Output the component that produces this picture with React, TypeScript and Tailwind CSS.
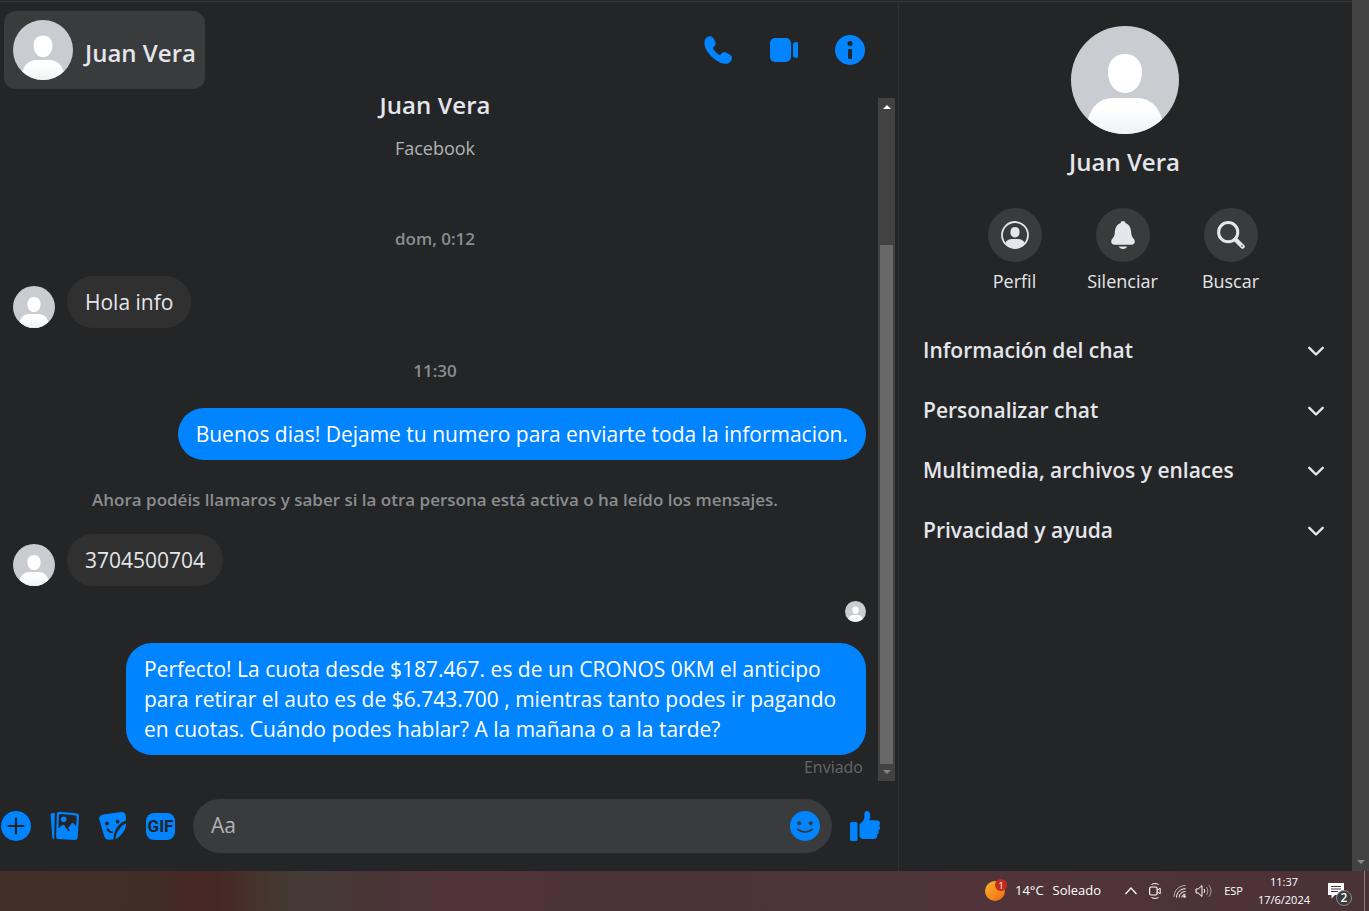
import { ReactNode } from "react";
import clsx from "clsx";

type IconProps = { className?: string };

const sections = [
  "Información del chat",
  "Personalizar chat",
  "Multimedia, archivos y enlaces",
  "Privacidad y ayuda",
];

function Avatar({ className }: IconProps) {
  return (
    <svg
      viewBox="0 0 108 108"
      className={clsx("shrink-0 rounded-full", className)}
      aria-hidden="true"
    >
      <defs>
        <linearGradient id="shoulders" x1="0" y1="0" x2="0" y2="1">
          <stop offset="0.3" stopColor="#fff" />
          <stop offset="1" stopColor="#eff1f3" />
        </linearGradient>
      </defs>
      <rect width="108" height="108" fill="#c9ccd1" />
      <path
        d="M54 28c10 0 17 7 17 18 0 12-7 21-17 21s-17-9-17-21c0-11 7-18 17-18z"
        fill="#fff"
      />
      <path
        d="M42 72h24c13 0 22 9 25 21v15H17V93c3-12 12-21 25-21z"
        fill="url(#shoulders)"
      />
    </svg>
  );
}

function PhoneIcon() {
  return (
    <svg viewBox="0 0 28 28" className="size-7" fill="currentColor" aria-hidden="true">
      <path d="M1.2 3.2C2.4 1 4.600 0 6.600.2c1.800.2 3 1.800 4 4 .9 2 1.400 3.400.8 4.900-.5 1.200-2.200 1.900-2.200 3.200 0 1.600 4.800 6.600 6.500 6.600 1.200 0 2-1.800 3.300-2.300 1.500-.6 2.900 0 4.900.9 2.200 1 3.800 2.200 4 4 .2 2-.9 4-3 5.400-2 1.200-5.400 1.300-8.600-.2C9.500 23.500 3.800 17.500 1.200 11.500.1 8.500.1 5.200 1.200 3.200z" />
    </svg>
  );
}

function VideoIcon() {
  return (
    <svg viewBox="0 0 28 24" className="h-6 w-7" fill="currentColor" aria-hidden="true">
      <rect width="21" height="24" rx="5" />
      <path d="M23 6.500c0-1.800 2-2.500 3.500-2.500.9 0 1.500.5 1.500 1.400v13.200c0 .9-.6 1.400-1.500 1.400-1.500 0-3.500-.7-3.500-2.500z" />
    </svg>
  );
}

function InfoIcon() {
  return (
    <svg viewBox="0 0 30 30" className="size-[30px]" aria-hidden="true">
      <circle cx="15" cy="15" r="15" fill="currentColor" />
      <circle cx="15" cy="8.500" r="2.500" fill="#242526" />
      <rect x="13" y="14" width="4" height="10" rx="1" fill="#242526" />
    </svg>
  );
}

function PlusIcon() {
  return (
    <svg viewBox="0 0 30 30" className="size-[30px]" aria-hidden="true">
      <circle cx="15" cy="15" r="15" fill="currentColor" />
      <path
        d="M15 7.500v15M7.500 15h15"
        stroke="#242526"
        strokeWidth="2.200"
        strokeLinecap="round"
      />
    </svg>
  );
}

function PhotosIcon() {
  return (
    <svg viewBox="0 0 30 30" className="size-[30px]" aria-hidden="true">
      <path
        d="M1.300 2.300 4.800 1.800 4.200 28.200C3 27.900 2.400 27 2.200 25.700L.6 3.600C.5 2.900.7 2.400 1.300 2.300z"
        fill="currentColor"
      />
      <path
        d="M9.500.8 26 2.300c1.900.2 3.100 1.400 3 3.300L27.700 26c-.1 1.900-1.300 3-3.200 2.900L8.500 28.100c-1.600-.1-2.500-1-2.400-2.600L6.800 3.500C6.900 1.700 7.900.7 9.500.8z"
        fill="currentColor"
      />
      <path
        d="M10.900 3.100 24.600 4.200c1.500.1 2.200 1 2.100 2.400l-.5 8.800-2.600-3c-.7-.8-1.500-.8-2.100.1L17.900 17.200l-3.300-3c-.7-.7-1.500-.7-2.200-.1L8.500 17.200 8.800 5.100c0-1.400.8-2.100 2.100-2z"
        fill="#242526"
      />
      <path
        d="m15.500 14.800 3.300 4.500"
        stroke="#242526"
        strokeWidth="1.700"
        strokeLinecap="round"
      />
      <circle cx="13.700" cy="8.300" r="2.800" fill="currentColor" />
    </svg>
  );
}

function StickerIcon() {
  return (
    <svg viewBox="0 0 28 28" className="size-7" aria-hidden="true">
      <path
        d="M4.500 2.400 22 .1c2.800-.3 4.700 1.200 4.900 4l.1 4.300c-6 2-10.600 7-12 14.500l-.8 4.700-4.300.1c-2.600 0-4.200-1.100-4.800-3.600L.3 7.500C-.3 4.600 1.500 2.700 4.500 2.400z"
        fill="currentColor"
      />
      <path
        d="M27 11.500c.3 3.500-1.300 6.700-3.700 9.800-2 2.700-4.300 4.900-6.900 5.900.4-4 1.200-6.300 3.600-9.600 1.600-2.400 4-4.900 7-6.100z"
        fill="currentColor"
      />
      <circle cx="8" cy="11.500" r="1.900" fill="#242526" />
      <circle cx="18.500" cy="9.700" r="1.900" fill="#242526" />
      <path
        d="M8.500 17c1 2 2.800 3.300 4.700 3.300"
        fill="none"
        stroke="#242526"
        strokeWidth="1.800"
        strokeLinecap="round"
      />
    </svg>
  );
}

// Rounded badge with the three letters set as real text
function GifIcon() {
  return (
    <span className="flex h-[27px] w-[29px] items-center justify-center rounded-lg bg-[#0084ff] font-['Roboto',sans-serif] text-[17px] leading-none font-bold text-[#242526]">
      GIF
    </span>
  );
}

function SmileIcon() {
  return (
    <svg viewBox="0 0 30 30" className="size-[30px]" aria-hidden="true">
      <circle cx="15" cy="15" r="15" fill="currentColor" />
      <circle cx="9.200" cy="12.200" r="2" fill="#3a3b3c" />
      <circle cx="20.800" cy="12.200" r="2" fill="#3a3b3c" />
      <path
        d="M8 18.500c4 3.300 10 3.300 14 0"
        fill="none"
        stroke="#3a3b3c"
        strokeWidth="2"
        strokeLinecap="round"
      />
    </svg>
  );
}

function LikeIcon() {
  return (
    <svg viewBox="0 0 30 30" className="size-[30px]" fill="currentColor" aria-hidden="true">
      <rect y="11" width="7.500" height="19" rx="1.500" />
      <path d="M9.500 14c0-1 .5-1.500 1.400-2.100 2.800-1.800 3.600-3.900 3.500-7.400C14.300 1.500 14.800 0 16.600 0c2.400 0 3.600 2 3.600 4.700 0 1.600-.4 3-.9 4.600h7c2.200 0 3.700 1.200 3.700 3 0 1-.3 1.700-.9 2.300.6.600.9 1.200.9 2.100 0 1.300-.7 2.200-1.700 2.700.3.500.5 1 .5 1.600 0 1.300-.7 2.200-1.900 2.600.2.400.3.800.3 1.300 0 1.900-1.500 3-3.700 3H14c-3 0-4.500-1.400-4.500-3.500z" />
    </svg>
  );
}

function ProfileIcon() {
  return (
    <svg viewBox="0 0 28 28" className="size-7" aria-hidden="true">
      <circle cx="14" cy="14" r="13" fill="none" stroke="currentColor" strokeWidth="1.800" />
      <path d="M14 6c2.800 0 4.600 2 4.600 4.900 0 3.200-1.800 5.500-4.600 5.500s-4.600-2.300-4.600-5.500C9.400 8 11.200 6 14 6z" fill="currentColor" />
      <path d="M4 22.500C5.500 19.300 8 18 11 18h6c3 0 5.500 1.300 7 4.500C21.500 26 18 27.500 14 27.500S6.500 26 4 22.500z" fill="currentColor" />
    </svg>
  );
}

function BellIcon() {
  return (
    <svg viewBox="0 0 28 28" className="size-7" fill="currentColor" aria-hidden="true">
      <path d="M14 0c1.400 0 2.200.8 2.400 2 3.600 1.300 5.500 4.600 5.700 8.500.2 3.300.6 5 2.300 6.900 1 1.100 1.400 2 1.400 3.200 0 2-1.300 3.200-3.400 3.200H5.600c-2.100 0-3.400-1.200-3.400-3.200 0-1.200.4-2.100 1.400-3.200 1.700-1.900 2.100-3.600 2.300-6.900.2-3.900 2.100-7.200 5.700-8.500C11.800.8 12.600 0 14 0z" />
      <path d="M9.800 25.500h8.400c-.6 1.600-2.200 2.500-4.200 2.500s-3.600-.9-4.200-2.500z" />
    </svg>
  );
}

function SearchIcon() {
  return (
    <svg viewBox="0 0 28 28" className="size-7" fill="none" stroke="currentColor" aria-hidden="true">
      <circle cx="11.200" cy="11.200" r="9.600" strokeWidth="3" />
      <path d="m18.500 18.500 7 7" strokeWidth="4.500" strokeLinecap="round" />
      <circle cx="25" cy="25" r="0.800" stroke="none" fill="#3a3b3c" />
    </svg>
  );
}

function ChevronIcon() {
  return (
    <svg viewBox="0 0 16 10" className="h-[10px] w-4" fill="none" aria-hidden="true">
      <path
        d="m1.300 1.800 6.700 6.700 6.700-6.700"
        stroke="currentColor"
        strokeWidth="2.400"
        strokeLinecap="round"
        strokeLinejoin="round"
      />
    </svg>
  );
}

function Arrow({ up, className }: { up?: boolean; className?: string }) {
  return (
    <svg viewBox="0 0 8 4" className={clsx("h-1 w-2", className)} fill="currentColor" aria-hidden="true">
      <path d={up ? "M4 0 8 4H0z" : "M0 0h8L4 4z"} />
    </svg>
  );
}

function HeaderButton({ label, children }: { label: string; children: ReactNode }) {
  return (
    <button aria-label={label} className="flex size-[30px] items-center justify-center text-[#0084ff]">
      {children}
    </button>
  );
}

function Incoming({ children }: { children: ReactNode }) {
  return (
    <div className="flex items-end gap-3 pl-[13px]">
      <Avatar className="size-[42px]" />
      <p className="rounded-[26px] bg-[#303030] px-[18px] py-[11px] text-[21px] leading-[30px] text-[#e4e6eb]">
        {children}
      </p>
    </div>
  );
}

function Outgoing({ children }: { children: ReactNode }) {
  return (
    <div className="flex justify-end pr-3">
      <p className="max-w-[740px] rounded-[26px] bg-[#0084ff] px-[18px] py-[11px] text-[21px] leading-[30px] text-white">
        {children}
      </p>
    </div>
  );
}

function Conversation() {
  return (
    <div className="flex min-h-0 flex-1 pr-[3px]">
      <div className="flex min-w-0 flex-1 flex-col justify-end overflow-hidden">
        <div className="pr-2 text-center">
          <h2 className="text-2xl leading-[30px] font-semibold text-[#e4e6eb]">Juan Vera</h2>
          <p className="mt-4 text-lg leading-6 text-[#b0b3b8]">Facebook</p>
        </div>
        <p className="mt-[67px] mb-[25px] pr-2 text-center text-[17px] leading-6 font-semibold text-[#8a8d91]">
          dom, 0:12
        </p>
        <Incoming>Hola info</Incoming>
        <p className="mt-[31px] mb-[25px] pr-2 text-center text-[17px] leading-6 font-semibold text-[#8a8d91]">
          11:30
        </p>
        <Outgoing>Buenos dias! Dejame tu numero para enviarte toda la informacion.</Outgoing>
        <p className="mt-7 mb-[22px] pr-2 text-center text-[17px] leading-6 font-semibold text-[#8a8d91]">
          Ahora podéis llamaros y saber si la otra persona está activa o ha leído los mensajes.
        </p>
        <Incoming>3704500704</Incoming>
        <div className="mt-[15px] mb-[21px] flex justify-end pr-3">
          <Avatar className="size-[21px]" />
        </div>
        <Outgoing>
          Perfecto! La cuota desde $187.467. es de un CRONOS 0KM el anticipo para retirar el auto es
          de $6.743.700 , mientras tanto podes ir pagando en cuotas. Cuándo podes hablar? A la
          mañana o a la tarde?
        </Outgoing>
        <p className="pr-[15px] pb-px text-right text-base leading-[25px] text-[#65676b]">Enviado</p>
      </div>
      <div className="flex w-[17px] flex-col items-center justify-between bg-[#424242]">
        <Arrow up className="mt-[7px] text-white" />
        <div className="mt-auto mb-[6px] h-[76%] w-[13px] bg-[#686868]" />
        <Arrow className="mb-[7px] text-[#868686]" />
      </div>
    </div>
  );
}

function Composer() {
  return (
    <form className="flex h-[90px] shrink-0 items-center pr-[18px] pl-px text-[#0084ff]">
      <div className="flex items-center gap-[19px]">
        <button type="button" aria-label="Más acciones">
          <PlusIcon />
        </button>
        <button type="button" aria-label="Adjuntar foto">
          <PhotosIcon />
        </button>
        <button type="button" aria-label="Elegir sticker">
          <StickerIcon />
        </button>
        <button type="button" aria-label="Elegir GIF">
          <GifIcon />
        </button>
      </div>
      <div className="mx-[18px] flex h-[54px] flex-1 items-center rounded-full bg-[#3a3b3c] pr-3 pl-[18px]">
        <input
          aria-label="Mensaje"
          placeholder="Aa"
          className="min-w-0 flex-1 bg-transparent text-[21px] text-[#e4e6eb] outline-none placeholder:text-[#b0b3b8]"
        />
        <button type="button" aria-label="Elegir emoji">
          <SmileIcon />
        </button>
      </div>
      <button type="button" aria-label="Me gusta">
        <LikeIcon />
      </button>
    </form>
  );
}

function Action({ label, children }: { label: string; children: ReactNode }) {
  return (
    <button className="flex w-[108px] flex-col items-center gap-[7px] text-[#e4e6eb]">
      <span className="flex size-[54px] items-center justify-center rounded-full bg-[#3a3b3c]">
        {children}
      </span>
      <span className="text-lg leading-6">{label}</span>
    </button>
  );
}

function Sidebar() {
  return (
    <aside className="w-[454px] shrink-0 border-l border-[#303133] pt-6 text-[#e4e6eb]">
      <div className="flex flex-col items-center pr-0.5">
        <Avatar className="size-[108px]" />
        <h2 className="mt-3 text-2xl leading-8 font-semibold">Juan Vera</h2>
        <div className="mt-[30px] flex pr-1">
          <Action label="Perfil">
            <ProfileIcon />
          </Action>
          <Action label="Silenciar">
            <BellIcon />
          </Action>
          <Action label="Buscar">
            <SearchIcon />
          </Action>
        </div>
      </div>
      <div className="mt-7">
        {sections.map((title) => (
          <button
            key={title}
            className="flex h-[60px] w-full items-center justify-between pr-7 pl-6 text-[21px] font-semibold"
          >
            {title}
            <ChevronIcon />
          </button>
        ))}
      </div>
    </aside>
  );
}

function Taskbar() {
  return (
    <footer className="flex h-10 shrink-0 items-center justify-end bg-[linear-gradient(90deg,#423028_0%,#402d27_11%,#482726_14%,#452826_16%,#46342d_19%,#443b37_22%,#4a3436_28%,#50343a_33%,#4b3338_46%,#4c3439_64%,#50343a_72%,#4b3236_100%)] text-[13px] text-white">
      <div className="relative size-5 rounded-full bg-linear-to-br from-[#f7b52c] to-[#f0640f]">
        <span className="absolute -top-0.5 left-[10px] flex size-3 items-center justify-center rounded-full bg-[#c42b1c] text-[9px] leading-none">
          1
        </span>
      </div>
      <span className="ml-[10px]">14°C</span>
      <span className="mr-6 ml-[9px]">Soleado</span>
      <svg viewBox="0 0 12 8" className="mr-3 h-2 w-3" fill="none" stroke="currentColor">
        <path d="m.5 7 5.500-6 5.500 6" strokeWidth="1.200" />
      </svg>
      <svg viewBox="0 0 12 16" className="mr-3 h-4 w-3" fill="none" stroke="currentColor">
        <path d="M2.500 1.500c2-1.200 5-1.200 7 0M2.500 14.500c2 1.200 5 1.200 7 0" />
        <rect x=".6" y="4" width="7.500" height="8" rx="1.500" strokeWidth="1.200" />
        <path d="m8.500 7 2.700-1.700v5.400L8.500 9" />
      </svg>
      <svg viewBox="0 0 14 14" className="mr-2 size-[14px]" fill="none" stroke="currentColor">
        <path d="M1 13C1 6.500 6 1.500 12.500 1.500" opacity=".6" />
        <path d="M3.500 13.500C3.500 8.500 7.500 4.700 12.500 4.700M6.200 13.500c0-3.500 2.800-6 6.300-6M9 13.500c0-1.900 1.500-3.300 3.500-3.300" />
        <circle cx="11.500" cy="12.500" r="1.200" fill="currentColor" stroke="none" />
      </svg>
      <svg viewBox="0 0 17 14" className="mr-3 h-[14px] w-[17px]" fill="none" stroke="currentColor">
        <path d="M1 5v4h2.200L7 12.500v-11L3.200 5z" />
        <path d="M9 5c.9 1.200.9 2.800 0 4" />
        <path d="M11.500 3c1.700 2.500 1.700 5.500 0 8M14 1.200c2.600 3.500 2.600 8.100 0 11.600" opacity=".5" />
      </svg>
      <span className="mr-[15px] text-[11px]">ESP</span>
      <time className="mr-[18px] text-center text-[11px] leading-[18px]">
        11:37
        <br />
        17/6/2024
      </time>
      <div className="relative mr-5 h-4">
        <svg viewBox="0 0 16 16" className="size-4" fill="currentColor">
          <path d="M0 0h16v12H7l-3.500 3.500V12H0z" />
          <path d="M3 3.500h10M3 6h10M3 8.500h7" stroke="#4b3236" />
        </svg>
        <span className="absolute top-[7px] left-2 flex size-4 items-center justify-center rounded-full border border-[#8a8a8a] bg-[#3b3b3b] text-xs leading-none font-semibold">
          2
        </span>
      </div>
      <div className="mr-1 h-full w-px bg-[#8d7c7f]" />
    </footer>
  );
}

export default function App() {
  return (
    <div className="flex h-screen flex-col overflow-hidden bg-[#242526] font-['Open_Sans',sans-serif]">
      <div className="flex min-h-0 flex-1">
        <div className="flex min-w-0 flex-1 flex-col border-t border-[#242526]">
          <div className="flex min-h-0 flex-1 border-t border-[#393a3b]">
            <main className="flex min-w-0 flex-1 flex-col">
              <header className="flex h-24 shrink-0 items-center justify-between pr-[33px] pl-1">
                <button className="flex h-[78px] items-center gap-3 rounded-xl bg-[#3a3b3c] pr-[9px] pl-[9px] text-2xl font-semibold text-[#e4e6eb]">
                  <Avatar className="size-[60px]" />
                  <span className="pt-1.5">Juan Vera</span>
                </button>
                <div className="flex items-center gap-9">
                  <HeaderButton label="Iniciar llamada">
                    <PhoneIcon />
                  </HeaderButton>
                  <HeaderButton label="Iniciar videollamada">
                    <VideoIcon />
                  </HeaderButton>
                  <HeaderButton label="Información de la conversación">
                    <InfoIcon />
                  </HeaderButton>
                </div>
              </header>
              <Conversation />
              <Composer />
            </main>
            <Sidebar />
          </div>
        </div>
        <div className="flex w-[17px] items-end justify-center bg-[#424242]">
          <Arrow className="mb-[7px] text-[#868686]" />
        </div>
      </div>
      <Taskbar />
    </div>
  );
}
